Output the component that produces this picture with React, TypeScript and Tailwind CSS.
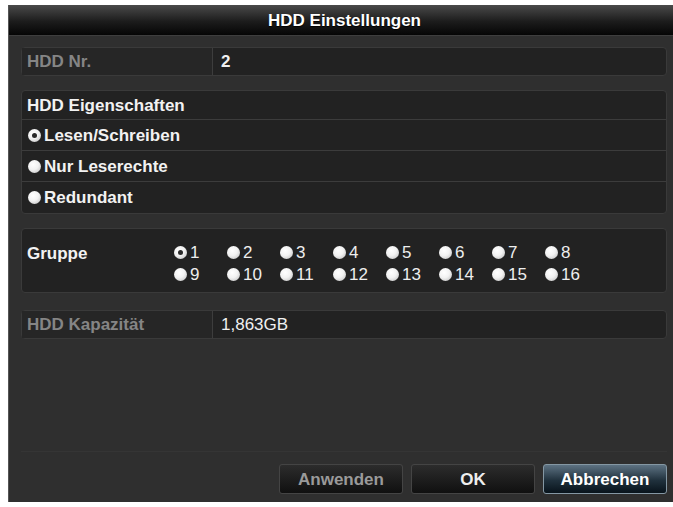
import React from 'react';

const font = { fontFamily: '"Liberation Sans", Arial, sans-serif' };

function Radio({ checked }: { checked?: boolean }) {
  return (
    <span className="relative inline-flex h-[13px] w-[13px] shrink-0 items-center justify-center rounded-full bg-[radial-gradient(circle_at_40%_35%,#ffffff_0%,#f2f2f2_45%,#b8b8b8_100%)]">
      {checked && <span className="h-[5px] w-[5px] rounded-full bg-[#2a2a2a]" />}
    </span>
  );
}

function InfoRow({ label, value, bold }: { label: string; value: string; bold?: boolean }) {
  return (
    <div className="flex h-[29px] rounded-[4px] border border-[#3a3a3a] bg-[#222222]">
      <div className="flex w-[191px] items-center border-r border-[#3d3d3d] bg-[#262626] pl-[5px] font-bold text-[#858585]">
        {label}
      </div>
      <div className={`flex flex-1 items-center pl-[8px] text-[#f0f0f0] ${bold ? 'font-bold' : 'font-normal'}`}>
        {value}
      </div>
    </div>
  );
}

const modes = [
  { label: 'Lesen/Schreiben', checked: true },
  { label: 'Nur Leserechte', checked: false },
  { label: 'Redundant', checked: false },
];

const groups = Array.from({ length: 16 }, (_, i) => i + 1);

export default function App() {
  return (
    <div className="h-[507px] w-[673px] overflow-hidden bg-white pl-[8px] pt-[5px]" style={font}>
      <div className="flex h-[497px] w-[672px] flex-col border-l border-[#555] bg-[#2f2f2f] text-[17px] leading-none">
        {/* Title bar */}
        <div className="flex h-[31px] shrink-0 items-center justify-center border-b border-[#3e3e3e] bg-[linear-gradient(#4a4a4a,#1c1c1c_55%,#050505)] font-bold text-white [text-shadow:0_1px_1px_#000]">
          HDD Einstellungen
        </div>

        <div className="flex flex-1 flex-col pl-[12px] pr-[13px]">
          <div className="mt-[11px]">
            <InfoRow label="HDD Nr." value="2" bold />
          </div>

          {/* Eigenschaften */}
          <div className="mt-[14px] rounded-[4px] border border-[#3a3a3a] bg-[#222222]">
            <div className="flex h-[29px] items-center border-b border-[#3c3c3c] pl-[5px] font-bold text-[#f2f2f2]">
              HDD Eigenschaften
            </div>
            {modes.map((m, i) => (
              <div
                key={m.label}
                className={`flex h-[31px] items-center gap-[3px] pl-[6px] font-bold text-[#f2f2f2] ${i < modes.length - 1 ? 'border-b border-[#3c3c3c]' : ''}`}
              >
                <Radio checked={m.checked} />
                {m.label}
              </div>
            ))}
          </div>

          {/* Gruppe */}
          <div className="mt-[14px] flex rounded-[4px] border border-[#3a3a3a] bg-[#222222] pb-[11px] pt-[16px]">
            <div className="w-[152px] pl-[5px] font-bold text-[#f2f2f2]">Gruppe</div>
            <div className="grid grid-cols-[repeat(8,53px)] gap-y-[8px] text-[#eeeeee]">
              {groups.map((g) => (
                <div key={g} className="flex h-[14px] items-center gap-[3px]">
                  <Radio checked={g === 1} />
                  {g}
                </div>
              ))}
            </div>
          </div>

          <div className="mt-[17px]">
            <InfoRow label="HDD Kapazität" value="1,863GB" />
          </div>

          <div className="mt-auto border-t border-[#353535] pb-[8px] pt-[12px]">
            <div className="flex justify-end gap-[8px]">
              <button className="h-[30px] w-[124px] rounded-[3px] border border-[#444] bg-[linear-gradient(#2c2c2c,#101010)] font-bold text-[#9a9a9a]">
                Anwenden
              </button>
              <button className="h-[30px] w-[124px] rounded-[3px] border border-[#444] bg-[linear-gradient(#2c2c2c,#101010)] font-bold text-[#eeeeee]">
                OK
              </button>
              <button className="h-[30px] w-[124px] rounded-[3px] border border-[#8497a3] bg-[linear-gradient(#5d7282,#20313d_55%,#08131b)] font-bold text-white">
                Abbrechen
              </button>
            </div>
          </div>
        </div>
      </div>
    </div>
  );
}
